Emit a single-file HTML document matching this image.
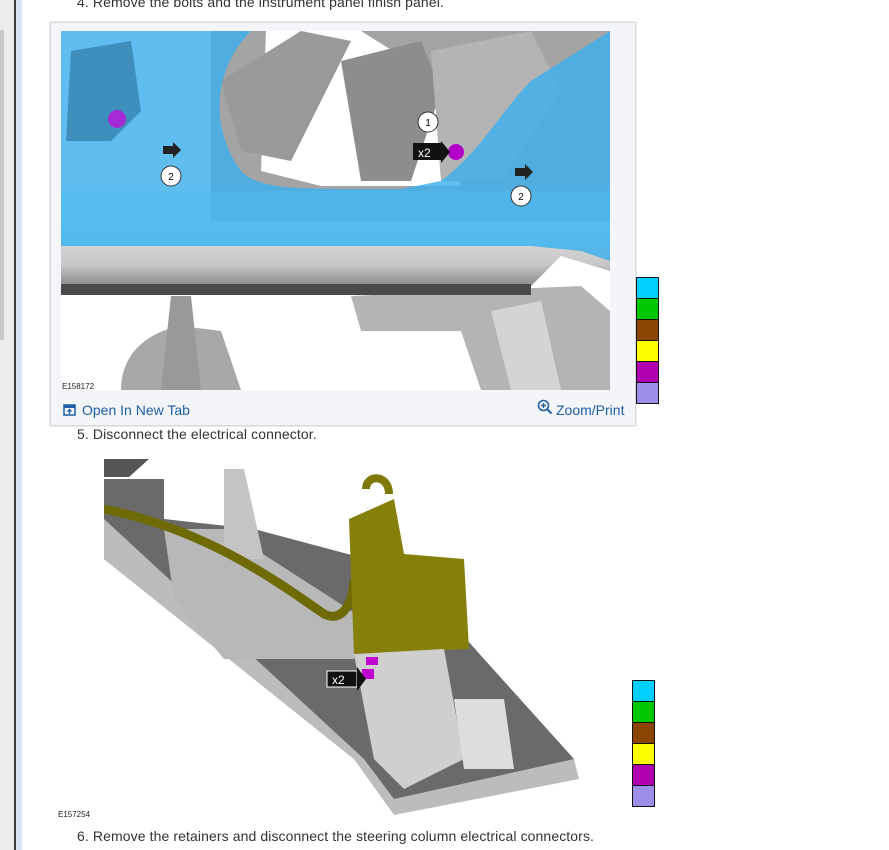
<!DOCTYPE html>
<html><head><meta charset="utf-8"><style>
html,body{margin:0;padding:0;background:#fff;width:889px;height:850px;overflow:hidden;position:relative;font-family:"Liberation Sans",Arial,sans-serif;}
.abs{position:absolute;}
.t{font-size:14px;color:#333;white-space:nowrap;letter-spacing:0.1px;}
.sw{position:absolute;width:21px;border:1px solid #111;}
</style></head><body>
<div class="abs" style="left:0;top:0;width:14px;height:850px;background:#ececec"></div>
<div class="abs" style="left:0;top:30px;width:4px;height:310px;background:#c8c8c8"></div>
<div class="abs" style="left:14px;top:0;width:2px;height:850px;background:#3a3a3a"></div>
<div class="abs" style="left:16px;top:0;width:6px;height:850px;background:#d6e4f2"></div>

<div class="abs t" style="left:77px;top:-6px">4. Remove the bolts and the instrument panel finish panel.</div>

<div class="abs" style="left:50px;top:22px;width:584px;height:402px;background:#f3f5f8;border:1px solid #d6d6d6;box-shadow:0 0 2px #ccc"></div>
<svg class="abs" style="left:61px;top:31px" width="549" height="359" viewBox="0 0 549 359">
 <defs><linearGradient id="g1" x1="0" y1="0" x2="0" y2="1"><stop offset="0" stop-color="#dcdcdc"/><stop offset="0.6" stop-color="#c8c8c8"/><stop offset="1" stop-color="#8a8a8a"/></linearGradient></defs>
 <rect width="549" height="359" fill="#fff"/>
 <path d="M60 359 C60 320 90 300 120 295 L160 300 L180 359Z" fill="#a8a8a8"/>
 <path d="M110 265 L130 265 L140 359 L100 359Z" fill="#999"/>
 <path d="M290 265 L520 255 L549 280 L549 359 L420 359 L400 300 L300 300Z" fill="#b4b4b4"/>
 <path d="M430 280 L480 270 L500 359 L450 359Z" fill="#d4d4d4"/>
 <path d="M0 200 L549 200 L549 240 L500 225 L470 255 L0 255Z" fill="url(#g1)"/>
 <rect x="0" y="253" width="470" height="11" fill="#4a4a4a"/>
 <path d="M150 0 L549 0 L549 190 L150 190Z" fill="#a4a4a4"/>
 <path d="M205 0 L300 0 L380 50 L400 155 L260 155 L200 140Z" fill="#fff"/>
 <path d="M160 50 L240 0 L290 10 L230 130 L180 120Z" fill="#9a9a9a"/>
 <path d="M280 30 L360 10 L380 60 L350 150 L300 150Z" fill="#8d8d8d"/>
 <path d="M370 20 L470 0 L500 60 L440 150 L380 150Z" fill="#b4b4b4"/>
 <path d="M0 0 L190 0 C150 40 150 100 180 140 C200 160 240 158 340 158 L380 150 C420 120 440 80 470 50 L549 0 L549 230 L520 220 L470 215 L0 215Z" fill="#3cb0ec" opacity="0.82"/>
 <path d="M0 160 L549 160 L549 215 L0 215Z" fill="#4fbcf2" opacity="0.5"/>
 <path d="M10 20 L70 10 L80 80 L50 110 L5 110Z" fill="#2a6f9c" opacity="0.6"/>
 <circle cx="56" cy="88" r="9" fill="#a42bd6"/>
 <circle cx="395" cy="121" r="8" fill="#b100c8"/>
 <rect x="352" y="112" width="28" height="17" fill="#111"/><path d="M380 110 L389 121 L380 132Z" fill="#111"/>
 <text x="357" y="126" font-size="12" fill="#fff" font-family="Liberation Sans">x2</text>
 <g font-family="Liberation Sans" font-size="10" text-anchor="middle">
  <circle cx="110" cy="145" r="10" fill="#fff" stroke="#333"/><text x="110" y="149">2</text>
  <circle cx="367" cy="91" r="10" fill="#fff" stroke="#333"/><text x="367" y="95">1</text>
  <circle cx="460" cy="165" r="10" fill="#fff" stroke="#333"/><text x="460" y="169">2</text>
 </g>
 <path d="M102 115 h10 v-4 l8 8 l-8 8 v-4 h-10z" fill="#222"/>
 <path d="M454 137 h10 v-4 l8 8 l-8 8 v-4 h-10z" fill="#222"/>
 <rect x="0" y="347" width="40" height="12" fill="#fff"/>
 <text x="1" y="358" font-size="8" font-family="Liberation Sans" fill="#222">E158172</text>
</svg>
<svg class="abs" style="left:63px;top:404px" width="13" height="12" viewBox="0 0 13 12"><rect x="1" y="1" width="11" height="10" fill="none" stroke="#1f5fa8" stroke-width="1.5"/><rect x="1" y="1" width="11" height="3" fill="#1f5fa8"/><path d="M6.5 10 V6 M4.5 7.5 L6.5 5.5 L8.5 7.5" stroke="#1f5fa8" stroke-width="1.3" fill="none"/></svg>
<div class="abs" style="left:82px;top:402px;font-size:14px;color:#1f5fa8;white-space:nowrap">Open In New Tab</div>
<svg class="abs" style="left:537px;top:399px" width="16" height="16" viewBox="0 0 16 16"><circle cx="6.5" cy="6.5" r="5" fill="none" stroke="#1f5fa8" stroke-width="1.6"/><path d="M10 10 L14.5 14.5" stroke="#1f5fa8" stroke-width="2"/><path d="M6.5 4 V9 M4 6.5 H9" stroke="#1f5fa8" stroke-width="1.4"/></svg>
<div class="abs" style="left:556px;top:402px;font-size:14px;color:#1f5fa8;white-space:nowrap">Zoom/Print</div>

<div class="sw" style="left:636px;top:277px;height:20px;background:#00d0ff"></div>
<div class="sw" style="left:636px;top:298px;height:20px;background:#00c800"></div>
<div class="sw" style="left:636px;top:319px;height:20px;background:#8b4500"></div>
<div class="sw" style="left:636px;top:340px;height:20px;background:#ffff00"></div>
<div class="sw" style="left:636px;top:361px;height:20px;background:#b000b0"></div>
<div class="sw" style="left:636px;top:382px;height:20px;background:#9b8fea"></div>

<div class="abs t" style="left:77px;top:426px">5. Disconnect the electrical connector.</div>

<svg class="abs" style="left:104px;top:459px" width="475" height="356" viewBox="0 0 475 356">
 <path d="M0 0 L45 0 L25 18 L0 18Z" fill="#555"/>
 <path d="M0 20 L60 20 L60 60 L150 70 L300 110 L380 200 L470 300 L470 320 L300 350 L250 300 L0 100Z" fill="#6a6a6a"/>
 <path d="M0 100 L250 300 L290 356 L475 320 L470 300 L290 340 L260 300 L0 60Z" fill="#bcbcbc"/>
 <path d="M60 70 L120 70 L260 160 L250 200 L120 200 L70 140Z" fill="#b8b8b8"/>
 <path d="M120 10 L140 10 L160 100 L120 100Z" fill="#c4c4c4"/>
 <path d="M0 50 C100 70 170 120 220 155 C240 165 250 140 250 120" stroke="#6e6a05" stroke-width="9" fill="none"/>
 <path d="M245 60 L290 40 L300 95 L360 100 L365 190 L250 195Z" fill="#85800a"/>
 <path d="M262 30 C262 15 285 15 285 35" stroke="#7d7a0a" stroke-width="8" fill="none"/>
 <path d="M250 195 L340 190 L360 300 L300 330 L270 300Z" fill="#cfcfcf"/>
 <path d="M350 240 L400 240 L410 310 L360 310Z" fill="#ddd"/>
 <rect x="262" y="198" width="12" height="8" fill="#c000d0"/>
 <rect x="258" y="210" width="12" height="10" fill="#c000d0"/>
 <rect x="223" y="212" width="30" height="16" fill="#111" stroke="#fff"/><path d="M253 208 L262 220 L253 232Z" fill="#111"/>
 <text x="228" y="225" font-size="12" fill="#fff" font-family="Liberation Sans">x2</text>
</svg>
<div class="abs" style="left:58px;top:810px;font-size:8px;color:#222">E157254</div>

<div class="sw" style="left:632px;top:680px;height:20px;background:#00d0ff"></div>
<div class="sw" style="left:632px;top:701px;height:20px;background:#00c800"></div>
<div class="sw" style="left:632px;top:722px;height:20px;background:#8b4500"></div>
<div class="sw" style="left:632px;top:743px;height:20px;background:#ffff00"></div>
<div class="sw" style="left:632px;top:764px;height:20px;background:#b000b0"></div>
<div class="sw" style="left:632px;top:785px;height:20px;background:#9b8fea"></div>

<div class="abs t" style="left:77px;top:828px">6. Remove the retainers and disconnect the steering column electrical connectors.</div>
</body></html>
